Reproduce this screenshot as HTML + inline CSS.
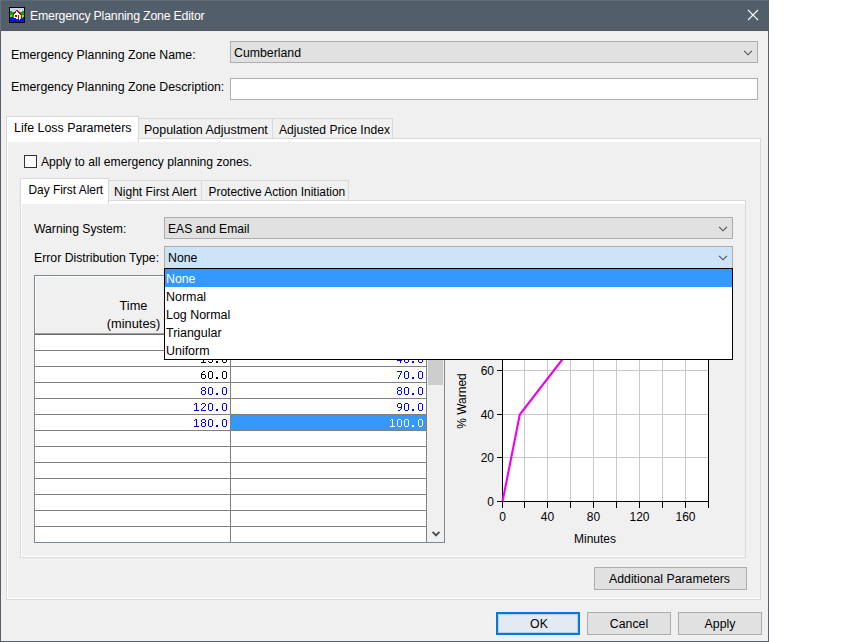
<!DOCTYPE html>
<html><head><meta charset="utf-8">
<style>
*{margin:0;padding:0;box-sizing:border-box}
html,body{width:860px;height:642px;background:#fff;overflow:hidden}
body{position:relative;font-family:"Liberation Sans",sans-serif;font-size:12.3px;color:#000}
.a{position:absolute}
.t{position:absolute;white-space:nowrap;line-height:12px}
.m{position:absolute;white-space:nowrap;line-height:12px;font-family:"Liberation Mono",monospace;font-size:12px;letter-spacing:-0.5px;text-align:right}
#win{left:0;top:0;width:769px;height:642px;background:#f0f0f0;border:1px solid #56606c;border-top:none}
#title{left:0;top:0;width:769px;height:31px;background:#535e6b;border-top:1px solid #5f6a77}
.combo{position:absolute;background:#e1e1e1;border:1px solid #adadad}
.chev{position:absolute;width:10px;height:6px}
.tabsel{position:absolute;background:#fff;border:1px solid #d9d9d9;border-bottom:none}
.tab{position:absolute;background:#f0f0f0;border:1px solid #d9d9d9}
.panel{position:absolute;background:#f0f0f0;border:1px solid #d9d9d9}
.btn{position:absolute;background:#e1e1e1;border:1px solid #adadad;text-align:center}
</style></head><body>
<div id="win" class="a"></div>
<div id="title" class="a"></div>
<div class="a" style="left:0;top:0;width:1px;height:31px;background:#66717d"></div>
<div class="a" style="left:1px;top:30px;width:767px;height:1px;background:#4d5865"></div>
<!-- icon -->
<svg class="a" style="left:9px;top:7px" width="16" height="16" viewBox="0 0 16 16" shape-rendering="crispEdges">
<rect x="0" y="0" width="16" height="16" fill="#000"/>
<rect x="1" y="1" width="2" height="1" fill="#d0d4e4"/>
<rect x="3" y="1" width="1" height="1" fill="#b8c4e8"/>
<rect x="4" y="1" width="5" height="1" fill="#d0d4e4"/>
<rect x="9" y="1" width="1" height="1" fill="#b8c4e8"/>
<rect x="10" y="1" width="5" height="1" fill="#d0d4e4"/>
<rect x="1" y="2" width="4" height="1" fill="#d0d4e4"/>
<rect x="5" y="2" width="1" height="1" fill="#b8c4e8"/>
<rect x="6" y="2" width="5" height="1" fill="#d0d4e4"/>
<rect x="11" y="2" width="1" height="1" fill="#b8c4e8"/>
<rect x="12" y="2" width="3" height="1" fill="#d0d4e4"/>
<rect x="1" y="3" width="6" height="1" fill="#d0d4e4"/>
<rect x="7" y="3" width="2" height="1" fill="#a81010"/>
<rect x="9" y="3" width="4" height="1" fill="#d0d4e4"/>
<rect x="13" y="3" width="1" height="1" fill="#b8c4e8"/>
<rect x="14" y="3" width="1" height="1" fill="#d0d4e4"/>
<rect x="1" y="4" width="2" height="1" fill="#10a010"/>
<rect x="3" y="4" width="3" height="1" fill="#d0d4e4"/>
<rect x="6" y="4" width="1" height="1" fill="#a81010"/>
<rect x="7" y="4" width="1" height="1" fill="#ffffff"/>
<rect x="8" y="4" width="2" height="1" fill="#a81010"/>
<rect x="10" y="4" width="3" height="1" fill="#d0d4e4"/>
<rect x="13" y="4" width="2" height="1" fill="#10a010"/>
<rect x="1" y="5" width="4" height="1" fill="#10a010"/>
<rect x="5" y="5" width="2" height="1" fill="#a81010"/>
<rect x="7" y="5" width="2" height="1" fill="#ffffff"/>
<rect x="9" y="5" width="2" height="1" fill="#a81010"/>
<rect x="11" y="5" width="4" height="1" fill="#10a010"/>
<rect x="1" y="6" width="3" height="1" fill="#10a010"/>
<rect x="4" y="6" width="2" height="1" fill="#a81010"/>
<rect x="6" y="6" width="4" height="1" fill="#ffffff"/>
<rect x="10" y="6" width="2" height="1" fill="#a81010"/>
<rect x="12" y="6" width="3" height="1" fill="#10a010"/>
<rect x="1" y="7" width="3" height="1" fill="#10a010"/>
<rect x="4" y="7" width="1" height="1" fill="#a81010"/>
<rect x="5" y="7" width="6" height="1" fill="#ffffff"/>
<rect x="11" y="7" width="2" height="1" fill="#a81010"/>
<rect x="13" y="7" width="2" height="1" fill="#10a010"/>
<rect x="1" y="8" width="2" height="1" fill="#90d010"/>
<rect x="3" y="8" width="2" height="1" fill="#10a010"/>
<rect x="5" y="8" width="1" height="1" fill="#ffffff"/>
<rect x="6" y="8" width="2" height="1" fill="#a81010"/>
<rect x="8" y="8" width="1" height="1" fill="#ffffff"/>
<rect x="9" y="8" width="1" height="1" fill="#a81010"/>
<rect x="10" y="8" width="1" height="1" fill="#ffffff"/>
<rect x="11" y="8" width="1" height="1" fill="#f0c8b8"/>
<rect x="12" y="8" width="1" height="1" fill="#10a010"/>
<rect x="13" y="8" width="2" height="1" fill="#90d010"/>
<rect x="1" y="9" width="2" height="1" fill="#90d010"/>
<rect x="3" y="9" width="2" height="1" fill="#10a010"/>
<rect x="5" y="9" width="1" height="1" fill="#ffffff"/>
<rect x="6" y="9" width="2" height="1" fill="#a81010"/>
<rect x="8" y="9" width="1" height="1" fill="#ffffff"/>
<rect x="9" y="9" width="1" height="1" fill="#a81010"/>
<rect x="10" y="9" width="1" height="1" fill="#ffffff"/>
<rect x="11" y="9" width="1" height="1" fill="#f0c8b8"/>
<rect x="12" y="9" width="1" height="1" fill="#10a010"/>
<rect x="13" y="9" width="2" height="1" fill="#90d010"/>
<rect x="1" y="10" width="3" height="1" fill="#0a14f0"/>
<rect x="4" y="10" width="1" height="1" fill="#10a010"/>
<rect x="5" y="10" width="4" height="1" fill="#ffffff"/>
<rect x="9" y="10" width="1" height="1" fill="#a81010"/>
<rect x="10" y="10" width="1" height="1" fill="#ffffff"/>
<rect x="11" y="10" width="1" height="1" fill="#f0c8b8"/>
<rect x="12" y="10" width="1" height="1" fill="#0a14f0"/>
<rect x="13" y="10" width="1" height="1" fill="#90d010"/>
<rect x="14" y="10" width="1" height="1" fill="#0a14f0"/>
<rect x="1" y="11" width="6" height="1" fill="#0a14f0"/>
<rect x="7" y="11" width="2" height="1" fill="#ffffff"/>
<rect x="9" y="11" width="1" height="1" fill="#a81010"/>
<rect x="10" y="11" width="1" height="1" fill="#ffffff"/>
<rect x="11" y="11" width="1" height="1" fill="#f0c8b8"/>
<rect x="12" y="11" width="3" height="1" fill="#0a14f0"/>
<rect x="1" y="12" width="1" height="1" fill="#0a14f0"/>
<rect x="2" y="12" width="1" height="1" fill="#0008c8"/>
<rect x="3" y="12" width="7" height="1" fill="#0a14f0"/>
<rect x="10" y="12" width="1" height="1" fill="#f0c8b8"/>
<rect x="11" y="12" width="2" height="1" fill="#0a14f0"/>
<rect x="13" y="12" width="1" height="1" fill="#0008c8"/>
<rect x="14" y="12" width="1" height="1" fill="#0a14f0"/>
<rect x="1" y="13" width="2" height="1" fill="#0a14f0"/>
<rect x="3" y="13" width="1" height="1" fill="#0008c8"/>
<rect x="4" y="13" width="2" height="1" fill="#0a14f0"/>
<rect x="6" y="13" width="1" height="1" fill="#0008c8"/>
<rect x="7" y="13" width="4" height="1" fill="#0a14f0"/>
<rect x="11" y="13" width="1" height="1" fill="#0008c8"/>
<rect x="12" y="13" width="3" height="1" fill="#0a14f0"/>
<rect x="1" y="14" width="14" height="1" fill="#0a14f0"/>
</svg>
<div class="t" style="left:30px;top:10px;color:#fff;font-size:12.3px;letter-spacing:-0.2px">Emergency Planning Zone Editor</div>
<svg class="a" style="left:747px;top:9px" width="12" height="12" viewBox="0 0 12 12"><path d="M1 1L11 11M11 1L1 11" stroke="#fff" stroke-width="1.1"/></svg>

<div class="t" style="left:11px;top:49px;font-size:12.3px">Emergency Planning Zone Name:</div>
<div class="combo" style="left:230px;top:41px;width:528px;height:22px"></div>
<div class="t" style="left:234px;top:47px">Cumberland</div>
<svg class="chev" style="left:743px;top:50px" viewBox="0 0 10 6"><path d="M1.1 0.8L5 4.8L8.9 0.8" stroke="#505050" stroke-width="1.15" fill="none"/></svg>

<div class="t" style="left:11px;top:81px;font-size:12.3px">Emergency Planning Zone Description:</div>
<div class="a" style="left:230px;top:78px;width:528px;height:22px;background:#fff;border:1px solid #adadad"></div>

<!-- outer tabs -->
<div class="panel" style="left:6px;top:138px;width:755px;height:462px;border-top-color:#d9d9d9"></div>
<div class="a" style="left:7px;top:139px;width:753px;height:3px;background:#fff"></div>
<div class="a" style="left:7px;top:139px;width:1px;height:460px;background:#fff"></div>
<div class="a" style="left:7px;top:598px;width:753px;height:1px;background:#fff"></div>
<div class="tab" style="left:138px;top:118px;width:135px;height:21px"></div>
<div class="tab" style="left:272px;top:118px;width:121px;height:21px"></div>
<div class="tabsel" style="left:6px;top:116px;width:133px;height:26px"></div>
<div class="t" style="left:14px;top:122px;font-size:12.45px">Life Loss Parameters</div>
<div class="t" style="left:144px;top:124px;font-size:12.45px">Population Adjustment</div>
<div class="t" style="left:279px;top:124px;font-size:12.1px">Adjusted Price Index</div>

<div class="a" style="left:24px;top:155px;width:13px;height:13px;border:1px solid #333;background:#fff"></div>
<div class="t" style="left:41px;top:156px;font-size:12.15px">Apply to all emergency planning zones.</div>

<!-- inner tabs -->
<div class="panel" style="left:20px;top:200px;width:726px;height:358px"></div>
<div class="a" style="left:21px;top:201px;width:724px;height:3px;background:#fff"></div>
<div class="a" style="left:21px;top:201px;width:1px;height:356px;background:#fff"></div>
<div class="a" style="left:21px;top:556px;width:724px;height:1px;background:#fff"></div>
<div class="tab" style="left:108px;top:180px;width:94px;height:21px"></div>
<div class="tab" style="left:201px;top:180px;width:148px;height:21px"></div>
<div class="tabsel" style="left:20px;top:178px;width:89px;height:26px"></div>
<div class="t" style="left:28.5px;top:184px;font-size:11.9px">Day First Alert</div>
<div class="t" style="left:114px;top:186px;font-size:12.1px">Night First Alert</div>
<div class="t" style="left:208.5px;top:186px;font-size:11.95px">Protective Action Initiation</div>

<div class="t" style="left:34px;top:223px;font-size:12.2px">Warning System:</div>
<div class="combo" style="left:164px;top:217px;width:569px;height:22px"></div>
<div class="t" style="left:168px;top:223px;font-size:12.1px">EAS and Email</div>
<svg class="chev" style="left:718px;top:226px" viewBox="0 0 10 6"><path d="M1.1 0.8L5 4.8L8.9 0.8" stroke="#505050" stroke-width="1.15" fill="none"/></svg>

<div class="t" style="left:34px;top:252px;font-size:12.25px">Error Distribution Type:</div>

<!-- TABLE -->
<div id="tbl" class="a" style="left:34px;top:275px;width:411px;height:268px;background:#fff;border:1px solid #7f8790"></div>
<div class="a" style="left:35px;top:276px;width:392px;height:57px;background:#f0f0f0;border-left:1px solid #fff;border-top:1px solid #fff"></div>
<div class="a" style="left:35px;top:333px;width:392px;height:1px;background:#a0a0a0"></div>
<div class="a" style="left:35px;top:334px;width:392px;height:1px;background:#696969"></div>
<div class="t" style="left:36px;top:300px;width:195px;text-align:center;font-size:12.8px">Time</div>
<div class="t" style="left:36px;top:318px;width:195px;text-align:center;font-size:12.8px">(minutes)</div>
<div class="t" style="left:231px;top:299px;width:195px;text-align:center">Percent</div>
<div class="a" style="left:427px;top:276px;width:17px;height:266px;background:#f0f0f0"></div>
<div class="a" style="left:428px;top:351px;width:15px;height:34px;background:#cdcdcd"></div>
<svg class="a" style="left:431px;top:530px" width="10" height="8" viewBox="0 0 10 8"><path d="M1.6 1.8L5 5.4L8.4 1.8" stroke="#4a4a4a" stroke-width="1.9" fill="none"/></svg>
<div class="a" style="left:35px;top:350px;width:392px;height:1px;background:#808080"></div>
<div class="a" style="left:35px;top:366px;width:392px;height:1px;background:#808080"></div>
<div class="a" style="left:35px;top:382px;width:392px;height:1px;background:#808080"></div>
<div class="a" style="left:35px;top:398px;width:392px;height:1px;background:#808080"></div>
<div class="a" style="left:35px;top:414px;width:392px;height:1px;background:#808080"></div>
<div class="a" style="left:35px;top:430px;width:392px;height:1px;background:#808080"></div>
<div class="a" style="left:35px;top:446px;width:392px;height:1px;background:#808080"></div>
<div class="a" style="left:35px;top:462px;width:392px;height:1px;background:#808080"></div>
<div class="a" style="left:35px;top:478px;width:392px;height:1px;background:#808080"></div>
<div class="a" style="left:35px;top:494px;width:392px;height:1px;background:#808080"></div>
<div class="a" style="left:35px;top:510px;width:392px;height:1px;background:#808080"></div>
<div class="a" style="left:35px;top:526px;width:392px;height:1px;background:#808080"></div>
<div class="a" style="left:230px;top:335px;width:1px;height:207px;background:#808080"></div>
<div class="a" style="left:426px;top:335px;width:1px;height:207px;background:#808080"></div>
<div class="a" style="left:231px;top:415px;width:195px;height:15px;background:#3399ff"></div>
<svg class="a" style="left:0;top:0" width="450" height="450" viewBox="0 0 450 450" shape-rendering="crispEdges"><path fill="#000" d="M209 339h3v1h-3zM208 340h1v1h-1zM212 340h1v1h-1zM208 341h1v1h-1zM212 341h1v1h-1zM208 342h1v1h-1zM212 342h1v1h-1zM208 343h1v1h-1zM212 343h1v1h-1zM208 344h1v1h-1zM212 344h1v1h-1zM208 345h1v1h-1zM212 345h1v1h-1zM209 346h3v1h-3zM216 345h2v1h-2zM216 346h2v1h-2zM223 339h3v1h-3zM222 340h1v1h-1zM226 340h1v1h-1zM222 341h1v1h-1zM226 341h1v1h-1zM222 342h1v1h-1zM226 342h1v1h-1zM222 343h1v1h-1zM226 343h1v1h-1zM222 344h1v1h-1zM226 344h1v1h-1zM222 345h1v1h-1zM226 345h1v1h-1zM223 346h3v1h-3zM202 355h2v1h-2zM201 356h1v1h-1zM203 356h1v1h-1zM203 357h1v1h-1zM203 358h1v1h-1zM203 359h1v1h-1zM203 360h1v1h-1zM203 361h1v1h-1zM201 362h5v1h-5zM208 355h5v1h-5zM208 356h1v1h-1zM208 357h1v1h-1zM208 358h4v1h-4zM212 359h1v1h-1zM212 360h1v1h-1zM208 361h1v1h-1zM212 361h1v1h-1zM209 362h3v1h-3zM216 361h2v1h-2zM216 362h2v1h-2zM223 355h3v1h-3zM222 356h1v1h-1zM226 356h1v1h-1zM222 357h1v1h-1zM226 357h1v1h-1zM222 358h1v1h-1zM226 358h1v1h-1zM222 359h1v1h-1zM226 359h1v1h-1zM222 360h1v1h-1zM226 360h1v1h-1zM222 361h1v1h-1zM226 361h1v1h-1zM223 362h3v1h-3zM203 371h2v1h-2zM202 372h1v1h-1zM201 373h1v1h-1zM201 374h4v1h-4zM201 375h1v1h-1zM205 375h1v1h-1zM201 376h1v1h-1zM205 376h1v1h-1zM201 377h1v1h-1zM205 377h1v1h-1zM202 378h3v1h-3zM209 371h3v1h-3zM208 372h1v1h-1zM212 372h1v1h-1zM208 373h1v1h-1zM212 373h1v1h-1zM208 374h1v1h-1zM212 374h1v1h-1zM208 375h1v1h-1zM212 375h1v1h-1zM208 376h1v1h-1zM212 376h1v1h-1zM208 377h1v1h-1zM212 377h1v1h-1zM209 378h3v1h-3zM216 377h2v1h-2zM216 378h2v1h-2zM223 371h3v1h-3zM222 372h1v1h-1zM226 372h1v1h-1zM222 373h1v1h-1zM226 373h1v1h-1zM222 374h1v1h-1zM226 374h1v1h-1zM222 375h1v1h-1zM226 375h1v1h-1zM222 376h1v1h-1zM226 376h1v1h-1zM222 377h1v1h-1zM226 377h1v1h-1zM223 378h3v1h-3z"/><path fill="#0000ff" d="M405 339h3v1h-3zM404 340h1v1h-1zM408 340h1v1h-1zM404 341h1v1h-1zM408 341h1v1h-1zM404 342h1v1h-1zM408 342h1v1h-1zM404 343h1v1h-1zM408 343h1v1h-1zM404 344h1v1h-1zM408 344h1v1h-1zM404 345h1v1h-1zM408 345h1v1h-1zM405 346h3v1h-3zM412 345h2v1h-2zM412 346h2v1h-2zM419 339h3v1h-3zM418 340h1v1h-1zM422 340h1v1h-1zM418 341h1v1h-1zM422 341h1v1h-1zM418 342h1v1h-1zM422 342h1v1h-1zM418 343h1v1h-1zM422 343h1v1h-1zM418 344h1v1h-1zM422 344h1v1h-1zM418 345h1v1h-1zM422 345h1v1h-1zM419 346h3v1h-3zM400 355h1v1h-1zM399 356h2v1h-2zM398 357h1v1h-1zM400 357h1v1h-1zM397 358h1v1h-1zM400 358h1v1h-1zM397 359h1v1h-1zM400 359h1v1h-1zM397 360h5v1h-5zM400 361h1v1h-1zM400 362h1v1h-1zM405 355h3v1h-3zM404 356h1v1h-1zM408 356h1v1h-1zM404 357h1v1h-1zM408 357h1v1h-1zM404 358h1v1h-1zM408 358h1v1h-1zM404 359h1v1h-1zM408 359h1v1h-1zM404 360h1v1h-1zM408 360h1v1h-1zM404 361h1v1h-1zM408 361h1v1h-1zM405 362h3v1h-3zM412 361h2v1h-2zM412 362h2v1h-2zM419 355h3v1h-3zM418 356h1v1h-1zM422 356h1v1h-1zM418 357h1v1h-1zM422 357h1v1h-1zM418 358h1v1h-1zM422 358h1v1h-1zM418 359h1v1h-1zM422 359h1v1h-1zM418 360h1v1h-1zM422 360h1v1h-1zM418 361h1v1h-1zM422 361h1v1h-1zM419 362h3v1h-3zM397 371h5v1h-5zM401 372h1v1h-1zM400 373h1v1h-1zM400 374h1v1h-1zM399 375h1v1h-1zM399 376h1v1h-1zM398 377h1v1h-1zM398 378h1v1h-1zM405 371h3v1h-3zM404 372h1v1h-1zM408 372h1v1h-1zM404 373h1v1h-1zM408 373h1v1h-1zM404 374h1v1h-1zM408 374h1v1h-1zM404 375h1v1h-1zM408 375h1v1h-1zM404 376h1v1h-1zM408 376h1v1h-1zM404 377h1v1h-1zM408 377h1v1h-1zM405 378h3v1h-3zM412 377h2v1h-2zM412 378h2v1h-2zM419 371h3v1h-3zM418 372h1v1h-1zM422 372h1v1h-1zM418 373h1v1h-1zM422 373h1v1h-1zM418 374h1v1h-1zM422 374h1v1h-1zM418 375h1v1h-1zM422 375h1v1h-1zM418 376h1v1h-1zM422 376h1v1h-1zM418 377h1v1h-1zM422 377h1v1h-1zM419 378h3v1h-3zM202 387h3v1h-3zM201 388h1v1h-1zM205 388h1v1h-1zM201 389h1v1h-1zM205 389h1v1h-1zM202 390h3v1h-3zM201 391h1v1h-1zM205 391h1v1h-1zM201 392h1v1h-1zM205 392h1v1h-1zM201 393h1v1h-1zM205 393h1v1h-1zM202 394h3v1h-3zM209 387h3v1h-3zM208 388h1v1h-1zM212 388h1v1h-1zM208 389h1v1h-1zM212 389h1v1h-1zM208 390h1v1h-1zM212 390h1v1h-1zM208 391h1v1h-1zM212 391h1v1h-1zM208 392h1v1h-1zM212 392h1v1h-1zM208 393h1v1h-1zM212 393h1v1h-1zM209 394h3v1h-3zM216 393h2v1h-2zM216 394h2v1h-2zM223 387h3v1h-3zM222 388h1v1h-1zM226 388h1v1h-1zM222 389h1v1h-1zM226 389h1v1h-1zM222 390h1v1h-1zM226 390h1v1h-1zM222 391h1v1h-1zM226 391h1v1h-1zM222 392h1v1h-1zM226 392h1v1h-1zM222 393h1v1h-1zM226 393h1v1h-1zM223 394h3v1h-3zM398 387h3v1h-3zM397 388h1v1h-1zM401 388h1v1h-1zM397 389h1v1h-1zM401 389h1v1h-1zM398 390h3v1h-3zM397 391h1v1h-1zM401 391h1v1h-1zM397 392h1v1h-1zM401 392h1v1h-1zM397 393h1v1h-1zM401 393h1v1h-1zM398 394h3v1h-3zM405 387h3v1h-3zM404 388h1v1h-1zM408 388h1v1h-1zM404 389h1v1h-1zM408 389h1v1h-1zM404 390h1v1h-1zM408 390h1v1h-1zM404 391h1v1h-1zM408 391h1v1h-1zM404 392h1v1h-1zM408 392h1v1h-1zM404 393h1v1h-1zM408 393h1v1h-1zM405 394h3v1h-3zM412 393h2v1h-2zM412 394h2v1h-2zM419 387h3v1h-3zM418 388h1v1h-1zM422 388h1v1h-1zM418 389h1v1h-1zM422 389h1v1h-1zM418 390h1v1h-1zM422 390h1v1h-1zM418 391h1v1h-1zM422 391h1v1h-1zM418 392h1v1h-1zM422 392h1v1h-1zM418 393h1v1h-1zM422 393h1v1h-1zM419 394h3v1h-3zM195 403h2v1h-2zM194 404h1v1h-1zM196 404h1v1h-1zM196 405h1v1h-1zM196 406h1v1h-1zM196 407h1v1h-1zM196 408h1v1h-1zM196 409h1v1h-1zM194 410h5v1h-5zM202 403h3v1h-3zM201 404h1v1h-1zM205 404h1v1h-1zM205 405h1v1h-1zM204 406h1v1h-1zM203 407h1v1h-1zM202 408h1v1h-1zM201 409h1v1h-1zM201 410h5v1h-5zM209 403h3v1h-3zM208 404h1v1h-1zM212 404h1v1h-1zM208 405h1v1h-1zM212 405h1v1h-1zM208 406h1v1h-1zM212 406h1v1h-1zM208 407h1v1h-1zM212 407h1v1h-1zM208 408h1v1h-1zM212 408h1v1h-1zM208 409h1v1h-1zM212 409h1v1h-1zM209 410h3v1h-3zM216 409h2v1h-2zM216 410h2v1h-2zM223 403h3v1h-3zM222 404h1v1h-1zM226 404h1v1h-1zM222 405h1v1h-1zM226 405h1v1h-1zM222 406h1v1h-1zM226 406h1v1h-1zM222 407h1v1h-1zM226 407h1v1h-1zM222 408h1v1h-1zM226 408h1v1h-1zM222 409h1v1h-1zM226 409h1v1h-1zM223 410h3v1h-3zM398 403h3v1h-3zM397 404h1v1h-1zM401 404h1v1h-1zM397 405h1v1h-1zM401 405h1v1h-1zM397 406h1v1h-1zM401 406h1v1h-1zM398 407h4v1h-4zM401 408h1v1h-1zM400 409h1v1h-1zM398 410h2v1h-2zM405 403h3v1h-3zM404 404h1v1h-1zM408 404h1v1h-1zM404 405h1v1h-1zM408 405h1v1h-1zM404 406h1v1h-1zM408 406h1v1h-1zM404 407h1v1h-1zM408 407h1v1h-1zM404 408h1v1h-1zM408 408h1v1h-1zM404 409h1v1h-1zM408 409h1v1h-1zM405 410h3v1h-3zM412 409h2v1h-2zM412 410h2v1h-2zM419 403h3v1h-3zM418 404h1v1h-1zM422 404h1v1h-1zM418 405h1v1h-1zM422 405h1v1h-1zM418 406h1v1h-1zM422 406h1v1h-1zM418 407h1v1h-1zM422 407h1v1h-1zM418 408h1v1h-1zM422 408h1v1h-1zM418 409h1v1h-1zM422 409h1v1h-1zM419 410h3v1h-3zM195 419h2v1h-2zM194 420h1v1h-1zM196 420h1v1h-1zM196 421h1v1h-1zM196 422h1v1h-1zM196 423h1v1h-1zM196 424h1v1h-1zM196 425h1v1h-1zM194 426h5v1h-5zM202 419h3v1h-3zM201 420h1v1h-1zM205 420h1v1h-1zM201 421h1v1h-1zM205 421h1v1h-1zM202 422h3v1h-3zM201 423h1v1h-1zM205 423h1v1h-1zM201 424h1v1h-1zM205 424h1v1h-1zM201 425h1v1h-1zM205 425h1v1h-1zM202 426h3v1h-3zM209 419h3v1h-3zM208 420h1v1h-1zM212 420h1v1h-1zM208 421h1v1h-1zM212 421h1v1h-1zM208 422h1v1h-1zM212 422h1v1h-1zM208 423h1v1h-1zM212 423h1v1h-1zM208 424h1v1h-1zM212 424h1v1h-1zM208 425h1v1h-1zM212 425h1v1h-1zM209 426h3v1h-3zM216 425h2v1h-2zM216 426h2v1h-2zM223 419h3v1h-3zM222 420h1v1h-1zM226 420h1v1h-1zM222 421h1v1h-1zM226 421h1v1h-1zM222 422h1v1h-1zM226 422h1v1h-1zM222 423h1v1h-1zM226 423h1v1h-1zM222 424h1v1h-1zM226 424h1v1h-1zM222 425h1v1h-1zM226 425h1v1h-1zM223 426h3v1h-3z"/><path fill="#fff" d="M391 419h2v1h-2zM390 420h1v1h-1zM392 420h1v1h-1zM392 421h1v1h-1zM392 422h1v1h-1zM392 423h1v1h-1zM392 424h1v1h-1zM392 425h1v1h-1zM390 426h5v1h-5zM398 419h3v1h-3zM397 420h1v1h-1zM401 420h1v1h-1zM397 421h1v1h-1zM401 421h1v1h-1zM397 422h1v1h-1zM401 422h1v1h-1zM397 423h1v1h-1zM401 423h1v1h-1zM397 424h1v1h-1zM401 424h1v1h-1zM397 425h1v1h-1zM401 425h1v1h-1zM398 426h3v1h-3zM405 419h3v1h-3zM404 420h1v1h-1zM408 420h1v1h-1zM404 421h1v1h-1zM408 421h1v1h-1zM404 422h1v1h-1zM408 422h1v1h-1zM404 423h1v1h-1zM408 423h1v1h-1zM404 424h1v1h-1zM408 424h1v1h-1zM404 425h1v1h-1zM408 425h1v1h-1zM405 426h3v1h-3zM412 425h2v1h-2zM412 426h2v1h-2zM419 419h3v1h-3zM418 420h1v1h-1zM422 420h1v1h-1zM418 421h1v1h-1zM422 421h1v1h-1zM418 422h1v1h-1zM422 422h1v1h-1zM418 423h1v1h-1zM422 423h1v1h-1zM418 424h1v1h-1zM422 424h1v1h-1zM418 425h1v1h-1zM422 425h1v1h-1zM419 426h3v1h-3z"/></svg>

<!-- CHART -->
<svg class="a" style="left:440px;top:270px" width="310" height="290" viewBox="440 270 310 290">
<rect x="502" y="282" width="206" height="219" fill="#fff"/>
<path d="M524.5 282V501 M547.5 282V501 M570.5 282V501 M593.5 282V501 M616.5 282V501 M639.5 282V501 M662.5 282V501 M685.5 282V501 M503 457.5H708 M503 414.5H708 M503 370.5H708 M503 326.5H708" stroke="#c8c8c8" stroke-width="1" fill="none"/>
<path d="M502.5 282V502 M502 501.5H709 M708.5 501.5V282 M502.5 501V508 M524.5 501V508 M547.5 501V508 M570.5 501V508 M593.5 501V508 M616.5 501V508 M639.5 501V508 M662.5 501V508 M685.5 501V508 M708.5 501V508 M497 501.5H503 M497 457.5H503 M497 414.5H503 M497 370.5H503 M497 326.5H503 M497 282.5H503" stroke="#000" stroke-width="1" fill="none"/>
<polyline points="502.5,501.5 519.8,414.5 571.2,348.0 594.1,326.5 639.9,304.5 708.5,282.5" stroke="#f000f0" stroke-width="2.1" fill="none" stroke-linejoin="miter"/>
</svg>
<div class="t" style="left:454px;top:496px;width:40px;text-align:right;font-size:12px">0</div>
<div class="t" style="left:454px;top:452px;width:40px;text-align:right;font-size:12px">20</div>
<div class="t" style="left:454px;top:409px;width:40px;text-align:right;font-size:12px">40</div>
<div class="t" style="left:454px;top:365px;width:40px;text-align:right;font-size:12px">60</div>
<div class="t" style="left:454px;top:321px;width:40px;text-align:right;font-size:12px">80</div>
<div class="t" style="left:482.5px;top:511px;width:40px;text-align:center;font-size:12px">0</div>
<div class="t" style="left:527.5px;top:511px;width:40px;text-align:center;font-size:12px">40</div>
<div class="t" style="left:573.5px;top:511px;width:40px;text-align:center;font-size:12px">80</div>
<div class="t" style="left:619.5px;top:511px;width:40px;text-align:center;font-size:12px">120</div>
<div class="t" style="left:665.5px;top:511px;width:40px;text-align:center;font-size:12px">160</div>
<div class="t" style="left:574px;top:533px;font-size:12px">Minutes</div>
<div class="t" style="left:434px;top:395px;width:56px;text-align:center;font-size:12px;transform:rotate(-90deg)">% Warned</div>

<!-- combo2 + dropdown on top -->
<div class="combo" style="left:164px;top:246px;width:569px;height:23px;background:#cce4f7"></div>
<div class="t" style="left:168px;top:252px">None</div>
<svg class="chev" style="left:718px;top:255px" viewBox="0 0 10 6"><path d="M1.1 0.8L5 4.8L8.9 0.8" stroke="#505050" stroke-width="1.15" fill="none"/></svg>
<div class="a" style="left:164px;top:268px;width:569px;height:92px;background:#fff;border:1px solid #000"></div>
<div class="a" style="left:165px;top:269px;width:567px;height:18px;background:#3399ff"></div>
<div class="t" style="left:166px;top:273px;color:#fff">None</div>
<div class="t" style="left:166px;top:291px;font-size:12.45px">Normal</div>
<div class="t" style="left:166px;top:309px;font-size:12.45px">Log Normal</div>
<div class="t" style="left:166px;top:327px;font-size:12.45px">Triangular</div>
<div class="t" style="left:166px;top:345px;font-size:12.45px">Uniform</div>

<div class="btn" style="left:594px;top:567px;width:153px;height:23px"></div>
<div class="t" style="left:609px;top:573px">Additional Parameters</div>

<div class="btn" style="left:496px;top:612px;width:84px;height:23px;background:#e3eaf2;border:2px solid #0a78d4;box-shadow:inset 0 0 0 1px #b5d3ee"></div>
<div class="t" style="left:497px;top:618px;width:84px;text-align:center">OK</div>
<div class="btn" style="left:587px;top:612px;width:84px;height:23px"></div>
<div class="t" style="left:587px;top:618px;width:84px;text-align:center">Cancel</div>
<div class="btn" style="left:678px;top:612px;width:84px;height:23px"></div>
<div class="t" style="left:678px;top:618px;width:84px;text-align:center">Apply</div>
</body></html>
